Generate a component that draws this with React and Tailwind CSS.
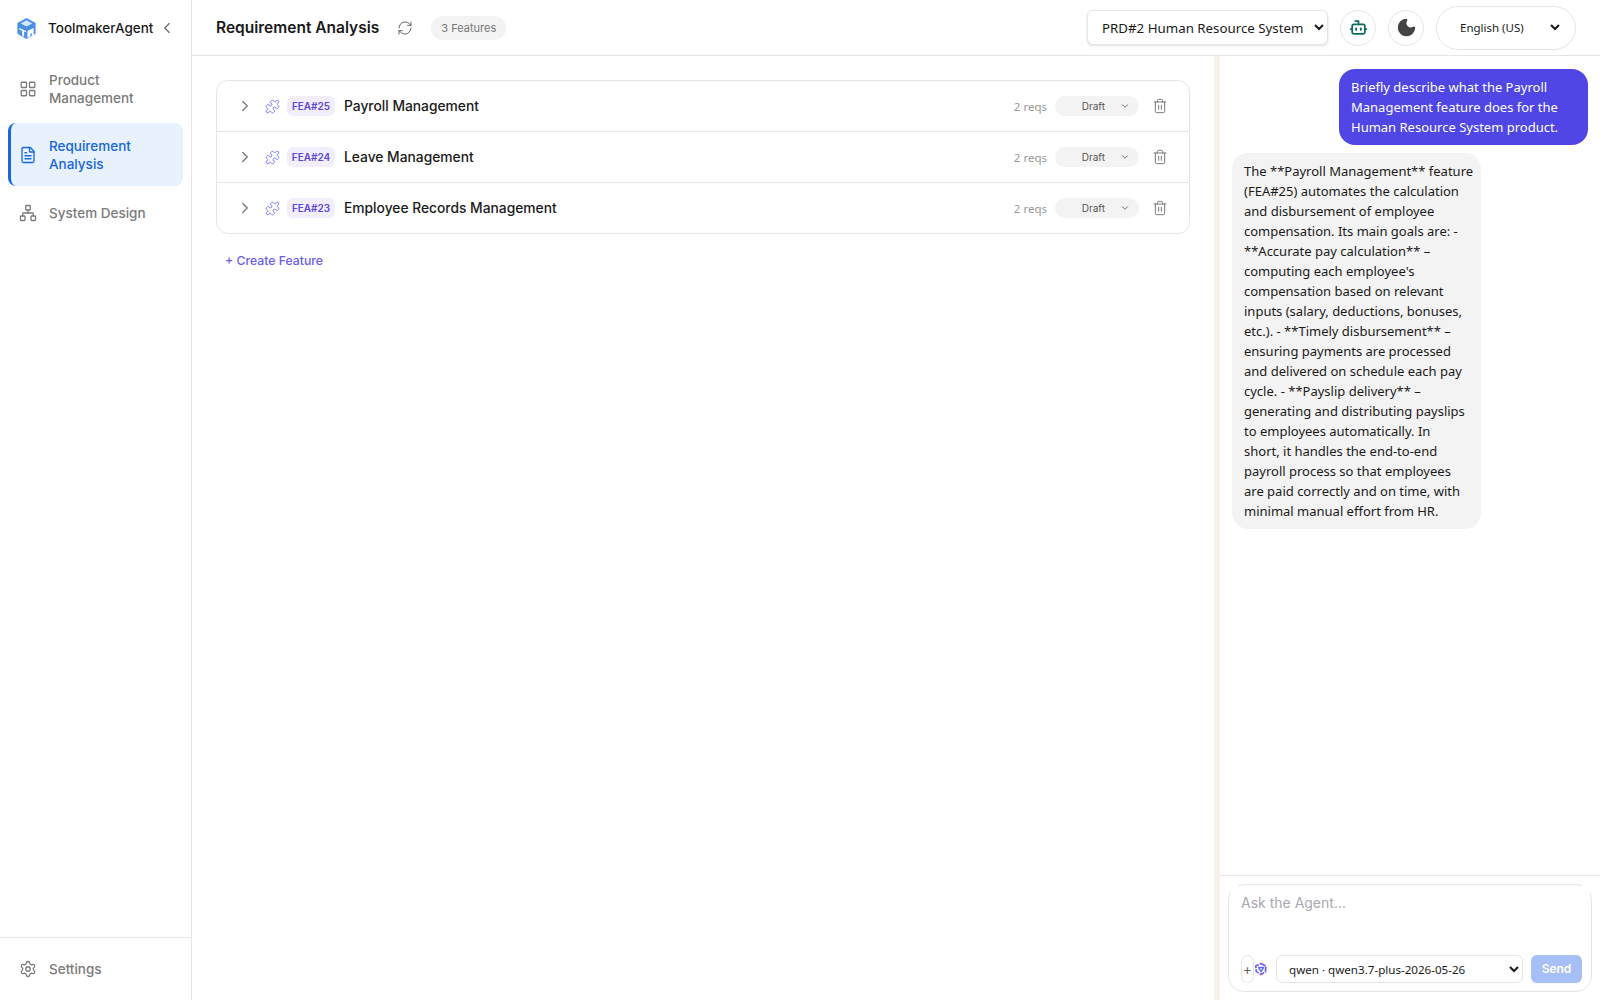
import { ChevronLeft, ChevronRight, ChevronDown, Puzzle, Trash2, RefreshCw, Bot, Moon, LayoutGrid, Network, Settings, FileText } from "lucide-react";

const FEATURES = [
  { id: "FEA#25", name: "Payroll Management" },
  { id: "FEA#24", name: "Leave Management" },
  { id: "FEA#23", name: "Employee Records Management" },
];

const ANSWER_LINES = [
  "The **Payroll Management** feature",
  "(FEA#25) automates the calculation",
  "and disbursement of employee",
  "compensation. Its main goals are: -",
  "**Accurate pay calculation** –",
  "computing each employee's",
  "compensation based on relevant",
  "inputs (salary, deductions, bonuses,",
  "etc.). - **Timely disbursement** –",
  "ensuring payments are processed",
  "and delivered on schedule each pay",
  "cycle. - **Payslip delivery** –",
  "generating and distributing payslips",
  "to employees automatically. In",
  "short, it handles the end-to-end",
  "payroll process so that employees",
  "are paid correctly and on time, with",
  "minimal manual effort from HR.",
];

function Logo() {
  return (
    <svg viewBox="0 0 24 24" className="h-[23px] w-[23px]">
      <path d="M12 1l9.500 5.200v11.400L12 23l-9.500-5.400V6.200z" fill="#4a90e2" />
      <path d="M12 3.500l6 3.300-6 3.200-6-3.200z" fill="#d5e7fb" />
      <path d="M4.500 11.500l7 3v1.500l-2-.8v5.300l-2-1v-5.200l-3-1.300zM13 14.500l6.500-3v7l-2 1.200v-3l-1.500.7v3l-3 1.500z" fill="#fff" />
    </svg>
  );
}

function QwenIcon() {
  return (
    <svg viewBox="0 0 24 24" className="h-[14px] w-[14px] shrink-0" fill="none" strokeLinejoin="round">
      <path d="M12 2.500l8.500 4.500-1 10-7.500 4.500-8-5L3 7z" stroke="#7c5cf5" strokeWidth="3" strokeDasharray="9 2" />
      <path d="M8 9.500h8.500L12 16.500z" stroke="#5a6cf0" strokeWidth="2.500" />
    </svg>
  );
}

function NavItem({ icon: Icon, active, pad = "py-[13px]", children }) {
  return (
    <div
      className={`flex items-center gap-3 rounded-lg text-[13.500px] font-medium leading-[18px] ${
        active
          ? "h-[63px] border-l-[3px] border-[#1668dc] bg-[#e8f1fe] pl-2 pr-3 text-[#1668dc]"
          : `${pad} pl-[11px] pr-3 text-[#7a7a7a]`
      }`}
    >
      <Icon className="h-[18px] w-[18px] shrink-0" strokeWidth={1.75} />
      <span>{children}</span>
    </div>
  );
}

function FeatureRow({ feature, last }) {
  return (
    <div className={`flex items-center pl-[19px] pr-[21px] ${last ? "h-[50px]" : "h-[51px] border-b border-[#e5e5e5]"}`}>
      <ChevronRight className="h-[18px] w-[18px] text-[#777]" strokeWidth={1.75} />
      <Puzzle className="ml-[11px] h-[15px] w-[15px] text-[#6f70f2]" strokeWidth={1.5} />
      <span className="ml-[7px] flex h-5 w-12 items-center justify-center rounded-md bg-[#f0eeff] text-[10px] font-semibold text-[#5b46e5]">
        {feature.id}
      </span>
      <span className="ml-[9px] text-[13.800px] font-medium text-[#1a1a1a]">{feature.name}</span>
      <span className="ml-auto mt-px font-['Noto_Sans',sans-serif] text-[11.500px] text-[#999]">2 reqs</span>
      <div className="ml-2 flex h-5 w-[84px] items-center justify-end rounded-full bg-[#f3f3f3] pr-[9px] text-[10px] text-[#555]">
        <span className="mr-[15px]">Draft</span>
        <ChevronDown className="h-[10px] w-[10px]" />
      </div>
      <Trash2 className="ml-[13px] h-4 w-4 text-[#777]" strokeWidth={1.5} />
    </div>
  );
}

export default function App() {
  return (
    <div className="flex h-screen bg-white font-['Inter',sans-serif] text-[#1a1a1a]">
      <aside className="flex w-[192px] shrink-0 flex-col border-r border-[#e5e5e5]">
        <div className="flex h-[56px] items-center pl-[15px]">
          <Logo />
          <span className="ml-[10px] mt-px text-[13.500px] font-medium">ToolmakerAgent</span>
          <ChevronLeft className="ml-[5px] h-[18px] w-[18px] text-[#666]" strokeWidth={1.5} />
        </div>
        <nav className="flex flex-col gap-[5px] px-2">
          <NavItem icon={LayoutGrid} pad="pb-[11px] pt-[15px]">Product Management</NavItem>
          <NavItem icon={FileText} active>Requirement Analysis</NavItem>
          <NavItem icon={Network}>System Design</NavItem>
        </nav>
        <div className="mt-auto border-t border-[#e5e5e5] px-2 py-[9px]">
          <NavItem icon={Settings}>Settings</NavItem>
        </div>
      </aside>

      <div className="flex min-w-0 flex-1 flex-col">
        <header className="flex h-[56px] shrink-0 items-center border-b border-[#e5e5e5] px-6">
          <h1 className="mt-px text-[15.500px] font-semibold">Requirement Analysis</h1>
          <RefreshCw className="ml-[18px] h-4 w-4 text-[#666]" strokeWidth={1.5} />
          <span className="ml-[18px] mt-px flex h-6 items-center rounded-full bg-[#f3f3f3] px-[10px] text-[11px] text-[#777]">3 Features</span>
          <select className="ml-auto h-[35px] w-[241px] rounded-md border border-[#e5e5e5] bg-white pl-[10px] font-['Noto_Sans',sans-serif] text-[13.300px] shadow-sm">
            <option>PRD#2 Human Resource System</option>
          </select>
          <button className="ml-3 flex h-9 w-9 items-center justify-center rounded-full border border-[#e5e5e5]">
            <Bot className="h-[19px] w-[19px] text-[#0f6b5f]" strokeWidth={2.25} />
          </button>
          <button className="ml-3 flex h-9 w-9 items-center justify-center rounded-full border border-[#e5e5e5]">
            <Moon className="h-[21px] w-[21px] fill-[#444] text-[#444]" />
          </button>
          <div className="ml-3 flex h-[44px] w-[140px] items-center rounded-full border border-[#e5e5e5] pl-[19px] pr-3">
            <select className="w-full bg-white font-['Noto_Sans',sans-serif] text-[11.500px]">
              <option>English (US)</option>
            </select>
          </div>
        </header>

        <div className="flex min-h-0 flex-1">
          <main className="min-w-0 flex-1 px-6 pt-6">
            <div className="rounded-xl border border-[#e5e5e5]">
              {FEATURES.map((feature, index) => (
                <FeatureRow key={feature.id} feature={feature} last={index === FEATURES.length - 1} />
              ))}
            </div>
            <button className="ml-[9px] mt-[18px] text-[12.250px] font-medium text-[#6a5cf0]">+ Create Feature</button>
          </main>

          <section className="flex w-[386px] shrink-0 flex-col border-l-[6px] border-[#f6f2ea]">
            <div className="flex-1 px-3 pt-[13px] font-['Noto_Sans',sans-serif] text-[13px] leading-5">
              <div className="ml-auto w-[249px] rounded-2xl bg-[#4f46e5] px-3 py-2 text-white">
                Briefly describe what the Payroll Management feature does for the Human Resource System product.
              </div>
              <div className="mt-2 w-[249px] rounded-2xl bg-[#f3f3f3] px-3 py-2 text-[#1a1a1a]">
                {ANSWER_LINES.map((line) => (
                  <div key={line} className="whitespace-nowrap">{line}</div>
                ))}
              </div>
            </div>
            <div className="h-[125px] shrink-0 border-t border-[#e5e5e5] px-2 pt-2">
              <div className="relative flex h-[108px] flex-col rounded-2xl border border-[#e5e5e5] pb-2 pl-3 pr-[9px] pt-2">
                <span className="absolute -left-px -top-px h-[9px] w-[10px] bg-white" />
                <span className="absolute -right-px -top-px h-[9px] w-[10px] bg-white" />
                <span className="text-sm text-[#a8a8b0]">Ask the Agent...</span>
                <div className="mt-auto flex items-center">
                  <span className="flex h-7 w-[13px] shrink-0 items-center justify-center rounded-full border border-[#e5e5e5] text-sm text-[#666]">+</span>
                  <QwenIcon />
                  <select className="ml-2 h-7 w-[247px] shrink-0 rounded-md border border-[#e5e5e5] bg-white pl-2 font-['Noto_Sans',sans-serif] text-[11.600px]">
                    <option>qwen · qwen3.7-plus-2026-05-26</option>
                  </select>
                  <button className="ml-2 h-7 w-[51px] shrink-0 rounded-md bg-[#a6bff7] text-xs font-semibold text-white">Send</button>
                </div>
              </div>
            </div>
          </section>
        </div>
      </div>
    </div>
  );
}
